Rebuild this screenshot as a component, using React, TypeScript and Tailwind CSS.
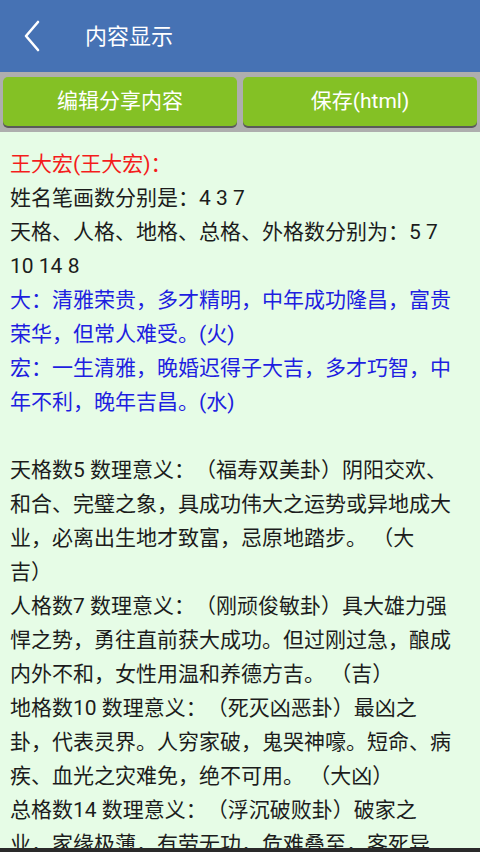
import React from 'react';

type Line = { text: string; color?: 'red' | 'blue' | 'black' };

const lines: Line[] = [
  { text: '王大宏(王大宏)：', color: 'red' },
  { text: '姓名笔画数分别是：4 3 7' },
  { text: '天格、人格、地格、总格、外格数分别为：5 7' },
  { text: '10 14 8' },
  { text: '大：清雅荣贵，多才精明，中年成功隆昌，富贵', color: 'blue' },
  { text: '荣华，但常人难受。(火)', color: 'blue' },
  { text: '宏：一生清雅，晚婚迟得子大吉，多才巧智，中', color: 'blue' },
  { text: '年不利，晚年吉昌。(水)', color: 'blue' },
  { text: '' },
  { text: '天格数5 数理意义：（福寿双美卦）阴阳交欢、' },
  { text: '和合、完璧之象，具成功伟大之运势或异地成大' },
  { text: '业，必离出生地才致富，忌原地踏步。 （大' },
  { text: '吉）' },
  { text: '人格数7 数理意义：（刚顽俊敏卦）具大雄力强' },
  { text: '悍之势，勇往直前获大成功。但过刚过急，酿成' },
  { text: '内外不和，女性用温和养德方吉。 （吉）' },
  { text: '地格数10 数理意义：（死灭凶恶卦）最凶之' },
  { text: '卦，代表灵界。人穷家破，鬼哭神嚎。短命、病' },
  { text: '疾、血光之灾难免，绝不可用。 （大凶）' },
  { text: '总格数14 数理意义：（浮沉破败卦）破家之' },
  { text: '业，家缘极薄，有劳无功，危难叠至，客死异' },
];

const colorClass = (c?: Line['color']) => {
  if (c === 'red') return 'text-[#f41c1c]';
  if (c === 'blue') return 'text-[#1e1ee0]';
  return 'text-[#1c1c1c]';
};

const App: React.FC = () => {
  return (
    <div
      className="w-[480px] h-[852px] flex flex-col overflow-hidden bg-[#e6fce6] [text-spacing-trim:space-all]"
      style={{ fontFamily: 'Roboto, "Noto Sans CJK SC", sans-serif' }}
    >
      {/* header */}
      <div className="h-[72px] shrink-0 bg-[#4672b4] flex items-center">
        <div className="w-[85px] flex items-center pl-[22px]">
          <svg width="20" height="32" viewBox="0 0 20 32" fill="none">
            <polyline
              points="16,2 4,16 16,30"
              stroke="#ffffff"
              strokeWidth="2.6"
              strokeLinecap="round"
              strokeLinejoin="round"
            />
          </svg>
        </div>
        <span className="text-white text-[22px] leading-none pt-[2px]">内容显示</span>
      </div>

      {/* action buttons */}
      <div className="h-[60px] shrink-0 bg-[#aeaeae] flex gap-[6px] px-[3px] pt-[5px]">
        <button className="flex-1 h-[49px] rounded-[5px] bg-[#84c125] shadow-[0_2px_0_#5a5a5a] text-white text-[21px] flex items-center justify-center">
          编辑分享内容
        </button>
        <button className="flex-1 h-[49px] rounded-[5px] bg-[#84c125] shadow-[0_2px_0_#5a5a5a] text-white text-[21px] flex items-center justify-center">
          保存(html)
        </button>
      </div>

      {/* content */}
      <div className="flex-1 overflow-hidden pt-[15px] px-[10px]">
        {lines.map((l, i) => (
          <div
            key={i}
            className={`h-[34px] leading-[34px] text-[21px] whitespace-nowrap ${colorClass(l.color)}`}
          >
            {l.text}
          </div>
        ))}
      </div>

      <div className="h-[4px] shrink-0 bg-[#2a2a2a]" />
    </div>
  );
};

export default App;
